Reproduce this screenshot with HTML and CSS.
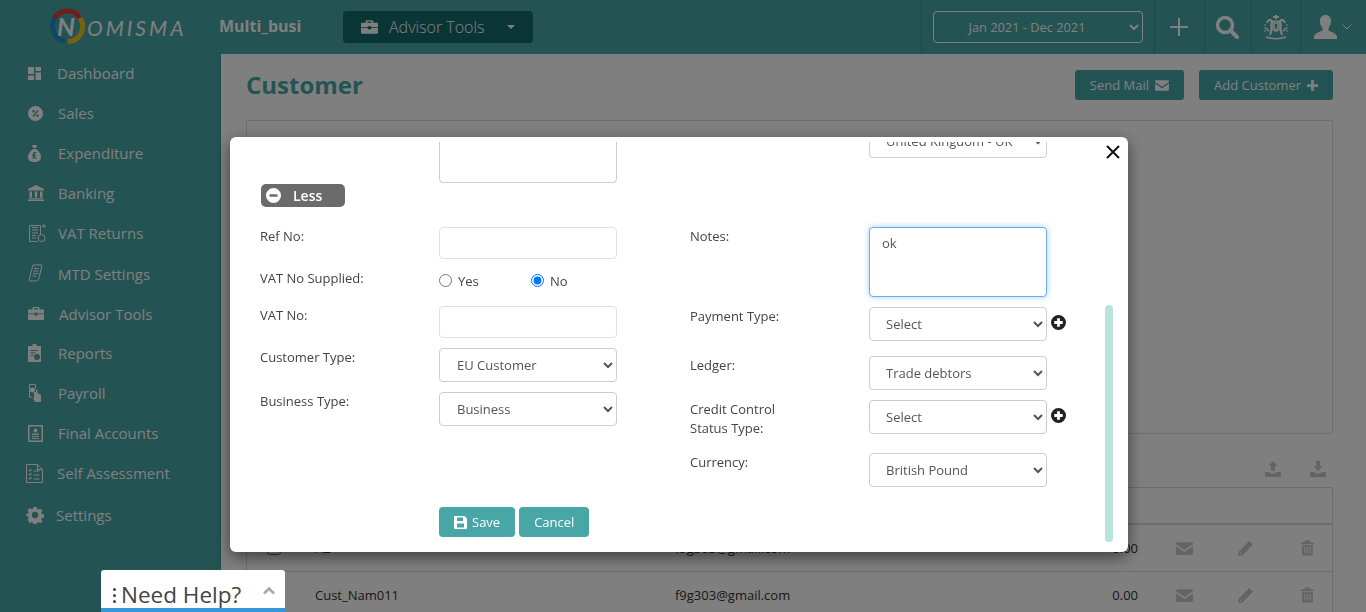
FILE: index.html
```html
<!DOCTYPE html>
<html lang="en">
<head>
    <meta charset="UTF-8">
    <title>Customer</title>
    <link rel="stylesheet" href="styles.css">
</head>
<body>
    <svg class="icon-defs" width="0" height="0">
        <symbol id="i-case" viewBox="0 0 20 16"><path d="M7 0h6a1.500 1.500 0 0 1 1.500 1.500V3H20v5H12V7H8v1H0V3h5.500V1.500A1.500 1.500 0 0 1 7 0zm.500 1.500V3h5V1.500zM0 9h8v1.500h4V9h8v5.500a1.500 1.500 0 0 1-1.500 1.500h-17A1.500 1.500 0 0 1 0 14.500z"/></symbol>
        <symbol id="i-mail" viewBox="0 0 16 12"><path d="M1.500 0h13A1.500 1.500 0 0 1 16 1.500v.6L8 7.500 0 2.100v-.6A1.500 1.500 0 0 1 1.500 0zM0 3.800l8 5.400 8-5.400v6.700a1.500 1.500 0 0 1-1.500 1.500h-13A1.500 1.500 0 0 1 0 10.500z"/></symbol>
        <symbol id="i-plus" viewBox="0 0 12 12"><path d="M4.500 0h3v4.500H12v3H7.500V12h-3V7.500H0v-3h4.500z"/></symbol>
        <symbol id="i-pencil" viewBox="0 0 14 14"><path d="M10.500 0 14 3.500 4 13.500 0 14l.5-4zM2 10.500l-.4 1.900 1.900-.4z"/></symbol>
        <symbol id="i-trash" viewBox="0 0 12 14"><path d="M4 0h4l1 2h3v1.500H0V2h3zM1 4.500h10V13a1 1 0 0 1-1 1H2a1 1 0 0 1-1-1zM3 6v6h1V6zm2.500 0v6h1V6zM8 6v6h1V6z"/></symbol>
        <symbol id="i-circle-plus" viewBox="0 0 16 16"><path fill-rule="evenodd" d="M8 0a8 8 0 1 1 0 16A8 8 0 0 1 8 0zM6.500 3.500v3h-3v3h3v3h3v-3h3v-3h-3v-3z"/></symbol>
    </svg>

    <header class="topbar">
        <svg class="logo" width="145" height="54" viewBox="0 0 145 54">
            <path class="line" d="M10 19A15 15 0 0 1 36 18" stroke="#e23a32" stroke-width="5"/>
            <path class="line" d="M11 18a15 15 0 0 0 10 23" stroke="#1a8fc4" stroke-width="5"/>
            <path class="line" d="M36 18a15 15 0 0 1-12 23.500" stroke="#efc21c" stroke-width="5"/>
            <text class="logo-n" x="13" y="36">N</text>
            <text class="logo-text" x="43" y="36">OMISMA</text>
        </svg>
        <div class="biz-name">Multi_busi</div>
        <div class="tools-btn">
            <svg class="tools-icon" width="17" height="14"><use href="#i-case"/></svg>
            <span>Advisor Tools</span>
            <i class="caret"></i>
        </div>
        <div class="top-right">
            <div class="top-cell date-cell">
                <select class="date-select"><option>Jan 2021 - Dec 2021</option></select>
            </div>
            <div class="top-cell plus-cell">
                <svg width="18" height="18" viewBox="0 0 18 18"><path d="M8 0h2v8h8v2h-8v8H8v-8H0V8h8z"/></svg>
            </div>
            <div class="top-cell search-cell">
                <svg width="24" height="24" viewBox="0 0 24 24"><circle class="line" cx="10" cy="10" r="7.500" stroke="currentColor" stroke-width="3.500"/><path d="M15.500 15.500 22 22" stroke="currentColor" stroke-width="4" stroke-linecap="round"/></svg>
            </div>
            <div class="top-cell crest-cell">
                <svg class="line" width="24" height="26" viewBox="0 0 24 26" stroke="currentColor">
                    <path d="M12 1v4M9 3h6M3 9c1-3 3-4 5-2-1 2 0 4 0 6-1 3-1 6-2 8M21 9c-1-3-3-4-5-2 1 2 0 4 0 6 1 3 1 6 2 8" stroke-width="2"/>
                    <circle cx="12" cy="12" r="5" stroke-width="1.500"/>
                    <path d="M10 9h4v5l-2 2-2-2zM2 14l3 3M22 14l-3 3M2 23c6 2 14 2 20 0" stroke-width="1.500"/>
                    <path d="M1 10v8M23 10v8" stroke-dasharray="2 1"/>
                </svg>
            </div>
            <div class="top-cell user-cell">
                <svg width="23" height="24" viewBox="0 0 23 24"><path d="M11.500 0c3.500 0 5.500 2.500 5.500 6 0 3-1 5.500-2.500 7v2.500c3 1.500 8.500 3 8.500 6.500v2H0v-2c0-3.500 5.500-5 8.500-6.500V13C7 11.500 6 9 6 6c0-3.500 2-6 5.500-6z"/></svg>
                <svg class="user-chev line" width="10" height="6" viewBox="0 0 10 6"><path d="M.5.5 5 5 9.500.5" stroke="currentColor"/></svg>
            </div>
        </div>
    </header>

    <div class="layout">
        <nav class="sidebar">
            <a class="nav-item nav-tight"><svg class="nav-icon" width="13" height="13" viewBox="0 0 13 13"><path d="M0 0h6v7H0zM7.500 0H13v4H7.500zM7.500 5.500H13V13H7.500zM0 8.500h6V13H0z"/></svg><span>Dashboard</span></a>
            <a class="nav-item"><svg class="nav-icon" width="15" height="15" viewBox="0 0 15 15"><path fill-rule="evenodd" d="M7.500 0a7.500 7.500 0 1 1 0 15 7.500 7.500 0 0 1 0-15zM9.500 4 4.500 10l1 1 5-6zM5.500 4a1.300 1.300 0 1 0 0 2.600 1.300 1.300 0 0 0 0-2.600zM9.500 8.400a1.300 1.300 0 1 0 0 2.600 1.300 1.300 0 0 0 0-2.600z"/></svg><span>Sales</span></a>
            <a class="nav-item"><svg class="nav-icon" width="13" height="17" viewBox="0 0 13 17"><path fill-rule="evenodd" d="M4 0h5L8 3H5zM5 4h3c3 2 5 5 5 8 0 3-2 5-6.500 5S0 15 0 12c0-3 2-6 5-8zM7 7c-2 0-2.500 1.500-2 3H4v1h1c0 1-.5 2-1 2.500h5V12.500H6.500c.2-.5.3-1 .3-1.500H8v-1H6.700c-.3-1 0-2 1.500-1.500l.3-1A4 4 0 0 0 7 7z"/></svg><span>Expenditure</span></a>
            <a class="nav-item"><svg class="nav-icon" width="16" height="16" viewBox="0 0 16 16"><path d="M8 0l8 4v1.500H0V4zM1.500 6.500h2.500v6H1.500zM6.800 6.500h2.400v6H6.800zM12 6.500h2.500v6H12zM.8 13.300h14.400v1H.8zM0 14.800h16V16H0z"/></svg><span>Banking</span></a>
            <a class="nav-item"><svg class="nav-icon line" width="18" height="19" viewBox="0 0 18 19" stroke="currentColor"><path d="M12.500 10V1.500h-11v16h8"/><path d="M4 6h6M4 9h6M4 11.500h4M4 14h4M4 3.500h6" stroke-width="1.200"/><circle cx="13.500" cy="14" r="3.500"/><path d="M15 1h2v2h-2z"/></svg><span>VAT Returns</span></a>
            <a class="nav-item nav-mtd"><svg class="nav-icon line" width="15" height="18" viewBox="0 0 15 18" stroke="currentColor"><path d="M5 1h9l-3 13c-.5 2-1.500 3-3 3H2c-1 0-1-1-.7-2z"/><path d="M6 4.500h5M5.500 7h5M5 9.500h5M4.500 12h4" stroke-width="1.200"/></svg><span>MTD Settings</span></a>
            <a class="nav-item nav-tools"><svg class="nav-icon" width="16" height="13"><use href="#i-case"/></svg><span>Advisor Tools</span></a>
            <a class="nav-item"><svg class="nav-icon" width="13" height="18" viewBox="0 0 13 18"><path fill-rule="evenodd" d="M4.500 0h4v2H13v16H0V2h4.500zM2.500 6v1h7V6zM2.500 8.500v1h5v-1zM2.500 11v1h3v-1zM9 10a3 3 0 1 0 0 6 3 3 0 0 0 0-6z"/></svg><span>Reports</span></a>
            <a class="nav-item"><svg class="nav-icon" width="14" height="18" viewBox="0 0 14 18"><path class="line" d="M1.500.500h6v4M1.500.500V13h3" stroke="currentColor"/><circle cx="4.500" cy="6" r="2.500"/><path d="M6 8h2V5.500h1.500V9l3.500 2v7H7l-2-4 1 .5z"/></svg><span>Payroll</span></a>
            <a class="nav-item"><svg class="nav-icon" width="15" height="17" viewBox="0 0 15 17"><path fill-rule="evenodd" d="M1 0h13a1 1 0 0 1 1 1v15a1 1 0 0 1-1 1H1a1 1 0 0 1-1-1V1a1 1 0 0 1 1-1zm.500 1.500v14h12v-14zM7.500 3.500a2 2 0 1 1 0 4 2 2 0 0 1 0-4zM4 8.500h7v1.500H4zM4 11h7v1H4zM4 13h7v1H4z"/></svg><span>Final Accounts</span></a>
            <a class="nav-item nav-tight"><svg class="nav-icon nav-icon-self line" width="17" height="19" viewBox="0 0 17 19" stroke="currentColor"><path d="M.500.500h11l5 5v13H.500z"/><path d="M11.500.500v5h5M3 6l1 1 1.500-2M3 10l1 1 1.500-2M3 14l1 1 1.500-2M7.500 7h6M7.500 11h6M7.500 15h6" stroke-width="1.100"/></svg><span>Self Assessment</span></a>
            <a class="nav-item nav-settings"><svg class="nav-icon" width="18" height="18" viewBox="-1 0 20 18"><path fill-rule="evenodd" d="M7.200 0h3.600l.5 2.500 1.400.6 2.200-1.400 2.400 2.400-1.400 2.200.6 1.400 2.500.5v3.600l-2.500.5-.6 1.400 1.400 2.200-2.400 2.400-2.200-1.400-1.400.6-.5 2.500H7.200l-.5-2.500-1.400-.6-2.200 1.400L.7 14.300l1.400-2.200-.6-1.400L-1 10.200V7.800l2.500-.5.6-1.400L.7 3.700 3.100 1.300l2.200 1.400 1.400-.6zM9 5.500a3.500 3.500 0 1 0 0 7 3.500 3.500 0 0 0 0-7z"/></svg><span>Settings</span></a>
        </nav>

        <main class="content">
            <div class="page-head">
                <h1>Customer</h1>
                <div class="head-btns">
                    <a class="head-btn">Send Mail <svg width="14" height="11"><use href="#i-mail"/></svg></a>
                    <a class="head-btn">Add Customer <svg width="11" height="11"><use href="#i-plus"/></svg></a>
                </div>
            </div>
            <div class="filter-panel"></div>
            <div class="table-tools">
                <svg width="16" height="16" viewBox="0 0 16 16"><path d="M8 0l4.500 5H10v5H6V5H3.500zM0 11h5v1.500h6V11h5v5H0z"/></svg>
                <svg width="16" height="16" viewBox="0 0 16 16"><path d="M6 0h4v5h2.500L8 10.500 3.500 5H6zM0 11h5v1.500h6V11h5v5H0z"/></svg>
            </div>
            <div class="cust-table">
                <div class="cust-head"></div>
                <div class="cust-row">
                    <span class="check"></span><span>A2</span><span>f9g303@gmail.com</span><span class="amount">0.00</span>
                    <svg class="act" width="17" height="13"><use href="#i-mail"/></svg>
                    <svg class="act" width="15" height="15"><use href="#i-pencil"/></svg>
                    <svg class="act act-last" width="13" height="16"><use href="#i-trash"/></svg>
                </div>
                <div class="cust-row">
                    <span></span><span>Cust_Nam011</span><span>f9g303@gmail.com</span><span class="amount">0.00</span>
                    <svg class="act" width="17" height="13"><use href="#i-mail"/></svg>
                    <svg class="act" width="15" height="15"><use href="#i-pencil"/></svg>
                    <svg class="act act-last" width="13" height="16"><use href="#i-trash"/></svg>
                </div>
            </div>
        </main>
    </div>

    <div class="overlay">
        <div class="modal">
            <a class="modal-close">
                <svg width="14" height="14" viewBox="0 0 14 14"><path d="M1 1l12 12M13 1 1 13" stroke="#111" stroke-width="2"/></svg>
            </a>
            <div class="modal-scroll">
                <form class="modal-form">
                    <div class="form-col">
                        <div class="form-row first">
                            <label></label>
                            <textarea class="field area"></textarea>
                        </div>
                        <a class="less-btn">
                            <svg width="15" height="15" viewBox="0 0 15 15"><path fill-rule="evenodd" d="M7.500 0a7.500 7.500 0 1 1 0 15 7.500 7.500 0 0 1 0-15zM3.500 6.300v2.400h8V6.300z"/></svg>
                            <span>Less</span>
                        </a>
                        <div class="form-row ref-row">
                            <label>Ref No:</label>
                            <input class="field" type="text">
                        </div>
                        <div class="form-row radio-row">
                            <label>VAT No Supplied:</label>
                            <span class="radio-opt yes"><input type="radio" name="vat"> Yes</span>
                            <span class="radio-opt"><input type="radio" name="vat" checked> No</span>
                        </div>
                        <div class="form-row">
                            <label>VAT No:</label>
                            <input class="field" type="text">
                        </div>
                        <div class="form-row">
                            <label>Customer Type:</label>
                            <select class="field pick"><option>EU Customer</option></select>
                        </div>
                        <div class="form-row">
                            <label>Business Type:</label>
                            <select class="field pick"><option>Business</option></select>
                        </div>
                        <div class="form-btns">
                            <a class="btn">
                                <svg width="13" height="13" viewBox="0 0 13 13"><path fill-rule="evenodd" d="M1 0h9.500L13 2.500V12a1 1 0 0 1-1 1H1a1 1 0 0 1-1-1V1a1 1 0 0 1 1-1zm2 1.500V5h6V1.500zM3 7.500V11.500h7V7.500z"/></svg>
                                Save
                            </a>
                            <a class="btn">Cancel</a>
                        </div>
                    </div>
                    <div class="form-col right-col">
                        <div class="form-row first">
                            <label></label>
                            <select class="field pick"><option>United Kingdom - UK</option></select>
                        </div>
                        <div class="form-row notes-row">
                            <label>Notes:</label>
                            <textarea class="field area focused">ok</textarea>
                        </div>
                        <div class="form-row">
                            <label>Payment Type:</label>
                            <select class="field pick"><option>Select</option></select>
                            <svg class="add-icon" width="15" height="15"><use href="#i-circle-plus"/></svg>
                        </div>
                        <div class="form-row gap-15">
                            <label>Ledger:</label>
                            <select class="field pick"><option>Trade debtors</option></select>
                        </div>
                        <div class="form-row">
                            <label>Credit Control<br>Status Type:</label>
                            <select class="field pick"><option>Select</option></select>
                            <svg class="add-icon" width="15" height="15"><use href="#i-circle-plus"/></svg>
                        </div>
                        <div class="form-row gap-15">
                            <label>Currency:</label>
                            <select class="field pick"><option>British Pound</option></select>
                        </div>
                    </div>
                </form>
            </div>
            <div class="scroll-thumb"></div>
        </div>
    </div>

    <div class="help-box">
        <span class="help-dots"><i></i><i></i><i></i></span>
        <span class="help-text">Need Help?</span>
        <svg class="help-chev line" width="12" height="8" viewBox="0 0 12 8"><path d="M1 6.500 6 1.500l5 5" stroke="#a9a9a9" stroke-width="2.500"/></svg>
    </div>
</body>
</html>
```

FILE: styles.css
```css
* {
    box-sizing: border-box;
}
html, body {
    margin: 0;
    height: 100%;
    overflow: hidden;
}
body {
    font-family: "Open Sans", sans-serif;
    font-size: 13px;
    color: #333;
    background: #fff;
}
svg {
    fill: currentColor;
    display: block;
}
svg.line, svg .line {
    fill: none;
}
.icon-defs {
    position: absolute;
}

/* top bar */
.topbar {
    height: 54px;
    background: #48a6a6;
    color: #fff;
    display: flex;
    align-items: center;
}
.logo {
    margin-left: 44px;
    flex: none;
}
.logo-n {
    font: italic 700 25px "Lato", sans-serif;
    fill: #fff;
}
.logo-text {
    font: italic 400 21px "Lato", sans-serif;
    letter-spacing: 3px;
    fill: #fff;
}
.biz-name {
    margin-left: 30px;
    margin-top: -3px;
    width: 124px;
    font-size: 16px;
    font-weight: 700;
}
.tools-btn {
    width: 190px;
    height: 32px;
    background: #146a6a;
    border-radius: 4px;
    display: flex;
    align-items: center;
    padding-left: 18px;
    font-size: 16px;
    font-weight: 300;
}
.tools-btn span {
    margin-left: 11px;
}
.caret {
    margin-left: 22px;
    border: 4px solid transparent;
    border-top-color: #fff;
    border-bottom: 0;
}
.top-right {
    margin-left: auto;
    height: 54px;
    display: flex;
}
.top-cell {
    border-left: 1px solid #3a9090;
    display: flex;
    align-items: center;
    justify-content: center;
}
.date-cell {
    width: 233px;
    padding-left: 11px;
    justify-content: flex-start;
}
.date-select {
    width: 210px;
    height: 32px;
    padding: 0 10px 0 0;
    background: transparent;
    border: 1px solid #fff;
    border-radius: 4px;
    color: #fff;
    font: 12.800px "Open Sans", sans-serif;
    text-align: center;
}
.plus-cell {
    width: 50px;
    padding-right: 2px;
}
.search-cell {
    width: 47px;
    padding-right: 2px;
}
.crest-cell {
    width: 49px;
}
.user-cell {
    width: 66px;
    justify-content: flex-start;
    padding-left: 13px;
}
.user-chev {
    margin-left: 5px;
}

/* layout */
.layout {
    display: flex;
    height: 558px;
}
.sidebar {
    width: 221px;
    flex: none;
    background: #48a6a6;
    color: #fff;
    padding-left: 26px;
    box-shadow: inset -3px 0 3px -2px rgba(0, 0, 0, 0.1);
}
.nav-item {
    height: 40px;
    display: flex;
    align-items: center;
    font-size: 15px;
    position: relative;
    top: -1px;
}
.nav-icon {
    flex: none;
    margin: 0 14px 0 2px;
}
.nav-item span {
    position: absolute;
    left: 32px;
}
.nav-mtd span {
    top: 11px;
}
.nav-tools span {
    left: 33px;
    top: 11px;
}
.nav-tight span {
    left: 31px;
}
.nav-icon-self {
    margin-left: 0;
}
.nav-settings {
    margin-top: 2px;
}
.nav-settings span {
    left: 30px;
}
.nav-settings .nav-icon {
    margin-left: 0;
}

/* page behind the dialog */
.content {
    flex: 1;
    min-width: 0;
    padding: 0 33px 0 25px;
    overflow: hidden;
}
.page-head {
    height: 66px;
    display: flex;
    justify-content: space-between;
}
h1 {
    margin: 14px 0 0;
    font-size: 24px;
    line-height: 33px;
    color: #48a6a6;
}
.head-btns {
    display: flex;
    gap: 15px;
    padding-top: 16px;
}
.head-btn {
    height: 30px;
    padding: 0 15px;
    background: #48a6a6;
    border-radius: 3px;
    color: #fff;
    display: flex;
    align-items: center;
    gap: 6px;
}
.filter-panel {
    height: 314px;
    border: 1px solid #ddd;
    background: #fff;
    border-radius: 2px;
}
.table-tools {
    height: 53px;
    display: flex;
    justify-content: flex-end;
    align-items: flex-start;
    gap: 29px;
    padding: 27px 7px 0 0;
    color: #c8c8c8;
}
.cust-table {
    border: 1px solid #ddd;
    border-radius: 2px;
    height: 140px;
}
.cust-head {
    height: 37px;
    border-bottom: 2px solid #ddd;
}
.cust-row {
    height: 47px;
    display: grid;
    grid-template-columns: 68px 360px 340px 139px 60px 62px 57px;
    align-items: center;
    border-bottom: 1px solid #ddd;
}
.check {
    width: 14px;
    height: 14px;
    margin-left: 20px;
    border: 1px solid #666;
    border-radius: 3px;
}
.amount {
    text-align: right;
    padding-right: 16px;
}
.act {
    justify-self: center;
    color: #c8c8c8;
}
.act-last {
    margin-left: 5px;
}

/* dialog */
.overlay {
    position: fixed;
    inset: 0;
    background: rgba(0, 0, 0, 0.5);
}
.modal {
    position: absolute;
    left: 230px;
    top: 137px;
    width: 898px;
    height: 415px;
    background: #fff;
    border-radius: 6px;
    box-shadow: 0 5px 15px rgba(0, 0, 0, 0.5);
    padding-top: 5px;
}
.modal-close {
    position: absolute;
    right: 8px;
    top: 8px;
    z-index: 1;
}
.modal-scroll {
    height: 405px;
    overflow: hidden;
}
.modal-form {
    margin-top: -29px;
    padding-left: 30px;
    display: flex;
}
.form-col {
    width: 430px;
}
.right-col {
    padding-top: 11px;
}
.right-col .pick {
    padding-left: 12px;
}
.form-row {
    display: flex;
    align-items: flex-start;
    margin-top: 10px;
}
.form-row.first {
    margin-top: 0;
}
.form-row label {
    width: 179px;
    flex: none;
    line-height: 19px;
    color: #444;
}
.field {
    width: 178px;
    height: 32px;
    border: 1px solid #e2e2e2;
    border-radius: 4px;
    background: #fff;
    color: #555;
    font: 13px "Open Sans", sans-serif;
    outline: none;
}
.pick {
    height: 34px;
    padding: 0 0 0 13px;
    border-color: #ccc;
}
.area {
    height: 70px;
    padding: 6px 12px;
    resize: none;
    display: block;
    border-color: #ccc;
}
.focused {
    border-color: #66afe9;
    box-shadow: 0 0 6px rgba(102, 175, 233, 0.6);
}
.less-btn {
    width: 84px;
    height: 23px;
    margin-top: 1px;
    margin-left: 1px;
    padding-left: 5px;
    background: #6b6b6b;
    border-radius: 5px;
    color: #fff;
    font-size: 14px;
    font-weight: 600;
    display: flex;
    align-items: center;
    gap: 12px;
}
.ref-row {
    margin-top: 20px;
}
.radio-row {
    margin-top: 10px;
    height: 27px;
}
.radio-opt {
    display: flex;
    align-items: center;
    gap: 6px;
    height: 22px;
    margin-top: 1px;
    color: #444;
}
.radio-opt input {
    margin: 0 0 2px;
    width: 13px;
    height: 13px;
}
.yes {
    width: 92px;
}
.notes-row {
    margin-top: 69px;
}
.gap-15 {
    margin-top: 15px;
}
.add-icon {
    margin: 8px 0 0 4px;
    color: #222;
}
.form-btns {
    margin: 81px 0 0 179px;
    display: flex;
    gap: 4px;
}
.btn {
    height: 30px;
    padding: 0 15px;
    background: #48a6a6;
    border-radius: 4px;
    color: #fff;
    display: flex;
    align-items: center;
    gap: 5px;
}
.scroll-thumb {
    position: absolute;
    left: 875px;
    top: 168px;
    width: 8px;
    height: 237px;
    border-radius: 4px;
    background: #b9e4d9;
}

/* help widget */
.help-box {
    position: fixed;
    left: 101px;
    top: 570px;
    width: 184px;
    height: 42px;
    background: #fff;
    border-radius: 3px 3px 0 0;
    border-bottom: 4px solid #3498db;
    display: flex;
    padding-left: 12px;
    color: #444;
}
.help-dots {
    display: flex;
    flex-direction: column;
    gap: 3px;
    padding-top: 18px;
    margin-right: 5px;
}
.help-dots i {
    width: 3px;
    height: 3px;
    border-radius: 50%;
    background: #444;
}
.help-text {
    font-size: 22.500px;
    line-height: 30px;
    padding-top: 10px;
}
.help-chev {
    margin: 17px 10px 0 auto;
}
```
